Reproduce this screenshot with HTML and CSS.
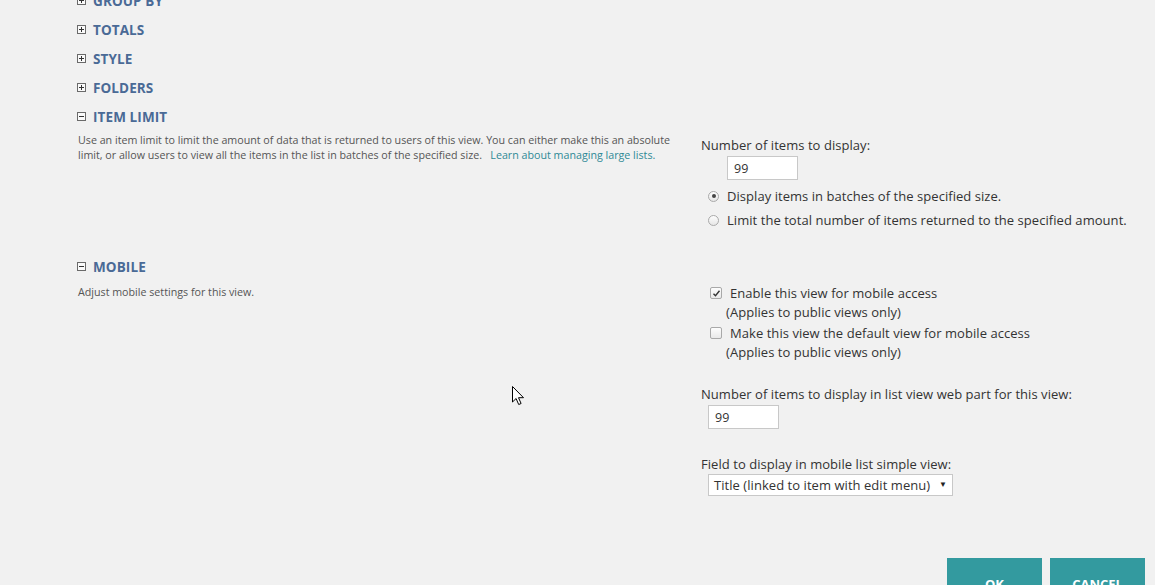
FILE: index.html
```html
<!DOCTYPE html>
<html lang="en">
<head>
  <meta charset="UTF-8">
  <meta name="viewport" content="width=device-width, initial-scale=1.0">
  <title>Edit View</title>
  <link rel="stylesheet" href="styles.css">
</head>
<body>
  <main class="page">
    <h3 class="sec-head"><span class="toggle"><svg width="9" height="9" viewBox="0 0 9 9"><rect x="0.5" y="0.5" width="8" height="8" fill="#fafafa" stroke="#6a6a6a"/><path d="M2 4.5h5M4.5 2v5" stroke="#333"/></svg></span>GROUP BY</h3>
    <h3 class="sec-head"><span class="toggle"><svg width="9" height="9" viewBox="0 0 9 9"><rect x="0.5" y="0.5" width="8" height="8" fill="#fafafa" stroke="#6a6a6a"/><path d="M2 4.5h5M4.5 2v5" stroke="#333"/></svg></span>TOTALS</h3>
    <h3 class="sec-head"><span class="toggle"><svg width="9" height="9" viewBox="0 0 9 9"><rect x="0.5" y="0.5" width="8" height="8" fill="#fafafa" stroke="#6a6a6a"/><path d="M2 4.5h5M4.5 2v5" stroke="#333"/></svg></span>STYLE</h3>
    <h3 class="sec-head"><span class="toggle"><svg width="9" height="9" viewBox="0 0 9 9"><rect x="0.5" y="0.5" width="8" height="8" fill="#fafafa" stroke="#6a6a6a"/><path d="M2 4.5h5M4.5 2v5" stroke="#333"/></svg></span>FOLDERS</h3>

    <section class="sec">
      <h3 class="sec-head"><span class="toggle"><svg width="9" height="9" viewBox="0 0 9 9"><rect x="0.5" y="0.5" width="8" height="8" fill="#fafafa" stroke="#6a6a6a"/><path d="M2 4.5h5" stroke="#333"/></svg></span>ITEM LIMIT</h3>
      <div class="sec-body">
        <p class="desc">Use an item limit to limit the amount of data that is returned to users of this view. You can either make this an absolute<br>limit, or allow users to view all the items in the list in batches of the specified size. &nbsp; <a href="#" class="link">Learn about managing large lists.</a></p>
        <div class="fields limit-fields">
          <div class="label">Number of items to display:</div>
          <input type="text" class="num-box indent" value="99">
          <label class="opt"><span class="radio on"></span>Display items in batches of the specified size.</label>
          <label class="opt"><span class="radio"></span>Limit the total number of items returned to the specified amount.</label>
        </div>
      </div>
    </section>

    <section class="sec">
      <h3 class="sec-head"><span class="toggle"><svg width="9" height="9" viewBox="0 0 9 9"><rect x="0.5" y="0.5" width="8" height="8" fill="#fafafa" stroke="#6a6a6a"/><path d="M2 4.5h5" stroke="#333"/></svg></span>MOBILE</h3>
      <div class="sec-body">
        <p class="desc desc-low">Adjust mobile settings for this view.</p>
        <div class="fields mobile-fields">
          <label class="chk-row"><span class="check on"><svg width="9" height="9" viewBox="0 0 9 9"><path d="M1.5 4.8l2 2 4-5" fill="none" stroke="#333" stroke-width="1.4"/></svg></span>Enable this view for mobile access</label>
          <div class="note">(Applies to public views only)</div>
          <label class="chk-row next"><span class="check"></span>Make this view the default view for mobile access</label>
          <div class="note">(Applies to public views only)</div>

          <div class="label gap-top">Number of items to display in list view web part for this view:</div>
          <input type="text" class="num-box small-indent" value="99">

          <div class="label gap-top2">Field to display in mobile list simple view:</div>
          <div class="select small-indent">Title (linked to item with edit menu)<span class="caret">&#9660;</span></div>
        </div>
      </div>
    </section>

    <div class="actions">
      <button class="btn">OK</button>
      <button class="btn">CANCEL</button>
    </div>
  </main>

  <svg class="cursor" width="13" height="20" viewBox="0 0 13 20"><path d="M0.5 0.5v15.5l3.6-3.5 2.6 6 2.4-1-2.6-5.8h5z" fill="#fff" stroke="#000" stroke-linejoin="round"/></svg>
</body>
</html>
```

FILE: styles.css
```css
body {
  margin: 0;
  height: 585px;
  overflow: hidden;
  background: #f1f1f1;
  font-family: "Open Sans", "Noto Sans", sans-serif;
  color: #333;
  position: relative;
}

.page {
  margin-top: -14px;
  padding-left: 77px;
}

.sec-head {
  margin: 0;
  height: 29px;
  display: flex;
  align-items: center;
  font-size: 13.5px;
  font-weight: 700;
  color: #4a6a96;
  letter-spacing: 0.1px;
}

.toggle {
  width: 9px;
  height: 9px;
  margin-right: 7px;
  display: flex;
}

.sec-body {
  display: grid;
  grid-template-columns: 600px 1fr;
  column-gap: 23px;
  padding-left: 1px;
}

.desc {
  margin: 2px 0 0;
  font-size: 10.7px;
  line-height: 15px;
  color: #555;
}

.desc-low {
  margin-top: 4px;
}

.link {
  color: #2f8996;
  text-decoration: none;
}

.fields {
  font-size: 13px;
  letter-spacing: 0.05px;
  color: #333;
  display: flex;
  flex-direction: column;
  align-items: flex-start;
}

.limit-fields {
  padding-top: 5px;
  padding-bottom: 20px;
}

.label {
  line-height: 18px;
}

.num-box {
  width: 71px;
  height: 24px;
  box-sizing: border-box;
  border: 1px solid #c8c8c8;
  background: #fff;
  font: inherit;
  font-size: 12.5px;
  color: #333;
  padding: 0 6px;
  margin: 2px 0 4px;
  outline: none;
}

.indent {
  margin-left: 26px;
}

.small-indent {
  margin-left: 7px;
}

.opt {
  height: 24px;
  display: flex;
  align-items: center;
  padding-left: 7px;
}

.radio {
  width: 11px;
  height: 11px;
  box-sizing: border-box;
  border: 1px solid #a9a9a9;
  border-radius: 50%;
  background: linear-gradient(#fdfdfd, #e6e6e6);
  margin-right: 8px;
  position: relative;
}

.radio.on::after {
  content: "";
  position: absolute;
  left: 2.5px;
  top: 2.5px;
  width: 4px;
  height: 4px;
  border-radius: 50%;
  background: #444;
}

.mobile-fields {
  padding-top: 2px;
}

.chk-row {
  height: 20px;
  display: flex;
  align-items: center;
  padding-left: 9px;
}

.chk-row.next {
  margin-top: 2px;
}

.check {
  width: 12px;
  height: 12px;
  box-sizing: border-box;
  border: 1px solid #a9a9a9;
  border-radius: 2px;
  background: linear-gradient(#fdfdfd, #e9e9e9);
  margin-right: 8px;
  display: flex;
  align-items: center;
  justify-content: center;
}

.note {
  line-height: 18px;
  padding-left: 25px;
}

.gap-top {
  margin-top: 24px;
}

.gap-top2 {
  margin-top: 22px;
}

.select {
  width: 245px;
  height: 22px;
  box-sizing: border-box;
  border: 1px solid #c8c8c8;
  background: #fff;
  padding: 0 5px;
  line-height: 20px;
  display: flex;
  justify-content: space-between;
  margin-top: 1px;
}

.caret {
  font-size: 8px;
  color: #222;
  line-height: 18px;
}

.actions {
  display: flex;
  justify-content: flex-end;
  gap: 8px;
  padding-right: 10px;
  margin-top: 62px;
}

.btn {
  width: 95px;
  height: 52px;
  border: none;
  background: #339a9f;
  color: #fff;
  font-family: inherit;
  font-size: 13px;
  font-weight: 700;
  padding: 0;
}

.cursor {
  position: absolute;
  left: 512px;
  top: 386px;
}
```
